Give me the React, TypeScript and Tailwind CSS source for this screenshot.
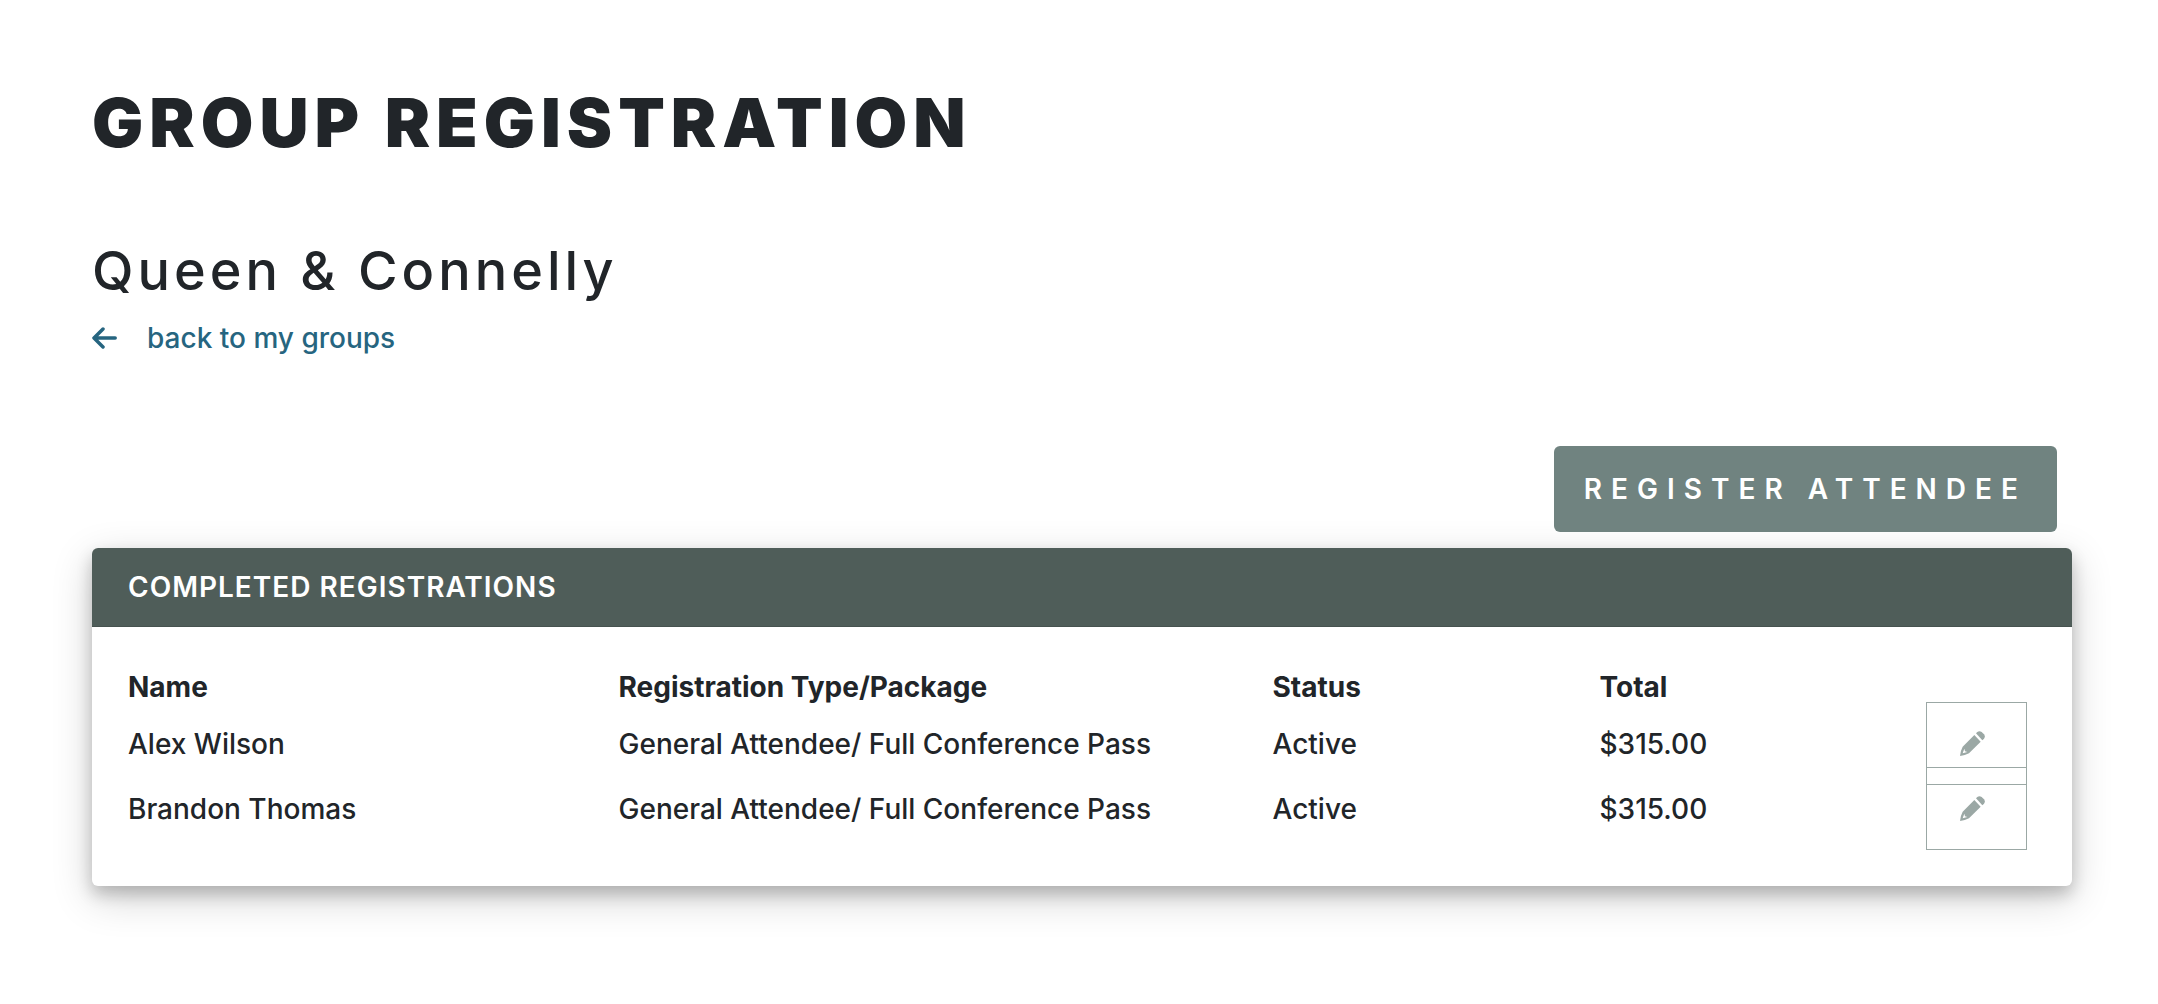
const registrations = [
  {
    name: 'Alex Wilson',
    type: 'General Attendee/ Full Conference Pass',
    status: 'Active',
    total: '$315.00',
  },
  {
    name: 'Brandon Thomas',
    type: 'General Attendee/ Full Conference Pass',
    status: 'Active',
    total: '$315.00',
  },
];

function ArrowIcon() {
  return (
    <svg
      className="mr-[30px] h-[22px] w-[25px]"
      viewBox="0 0 25 22"
      fill="none"
      stroke="currentColor"
      strokeWidth="3.5"
      strokeLinecap="round"
      strokeLinejoin="round"
      aria-hidden="true"
    >
      <path d="M2.4 11H23.2M11 2L2 11L11 20" />
    </svg>
  );
}

function PencilIcon() {
  return (
    <svg
      className="h-[25px] w-[25px]"
      viewBox="0 0 75 75"
      fill="currentColor"
      aria-hidden="true"
    >
      <path d="M48 7L52 3Q58 -2 65 3L72 10Q77 17 72 23L67 28Z" />
      <path
        fillRule="evenodd"
        d="M43 12L62 32L27 67Q15 74 0 75Q1 60 8 47ZM8 67L22 63L15 61L13 53Z"
      />
    </svg>
  );
}

export default function App() {
  return (
    <main className="min-h-screen bg-white pt-[86px] pr-[86px] pb-28 pl-[92px] font-['Inter',sans-serif] text-[28px] leading-[42px] font-medium text-[#212529]">
      <h1 className="text-[68px] leading-[72px] font-black tracking-[6px] uppercase">
        Group Registration
      </h1>
      <h2 className="mt-[77px] text-[54px] leading-[72px] tracking-[4px]">
        Queen &amp; Connelly
      </h2>
      <a href="#" className="mt-[10px] inline-flex items-center text-[#266580]">
        <ArrowIcon />
        back to my groups
      </a>
      <div className="mt-[86px] mr-[15px] flex justify-end">
        <button
          type="button"
          className="h-[86px] rounded-md bg-[#708380] px-[30px] font-semibold tracking-[9px] text-white uppercase"
        >
          Register Attendee
        </button>
      </div>
      <section className="mt-4 rounded-md bg-white shadow-[0_8px_16px_rgba(0,0,0,0.2),0_12px_40px_rgba(0,0,0,0.19)]">
        <h3 className="rounded-t-md border-b border-[#46524f] bg-[#4f5d59] px-9 py-[18px] font-semibold tracking-[1px] text-white uppercase">
          Completed Registrations
        </h3>
        <div className="px-[9px] pt-9 pb-[45px]">
          <table className="w-full table-fixed text-left">
            <thead>
              <tr className="h-12 font-extrabold">
                <th className="w-3/12 pl-[27px]">Name</th>
                <th className="w-4/12 pl-[27px]">Registration Type/Package</th>
                <th className="w-2/12 pl-[27px]">Status</th>
                <th className="w-2/12 pl-[27px]">Total</th>
                <td className="w-1/12"></td>
              </tr>
            </thead>
            <tbody>
              {registrations.map((item) => (
                <tr key={item.name} className="h-[65px]">
                  <td className="pl-[27px]">{item.name}</td>
                  <td className="pl-[27px]">{item.type}</td>
                  <td className="pl-[27px]">{item.status}</td>
                  <td className="pl-[27px]">{item.total}</td>
                  <td className="pl-[27px]">
                    <button
                      type="button"
                      aria-label={`Edit ${item.name}`}
                      className="-my-3 flex h-[83px] w-[101px] items-center border border-[#9ba8a5] pl-[33px] text-[#9ba8a5]"
                    >
                      <PencilIcon />
                    </button>
                  </td>
                </tr>
              ))}
            </tbody>
          </table>
        </div>
      </section>
    </main>
  );
}
